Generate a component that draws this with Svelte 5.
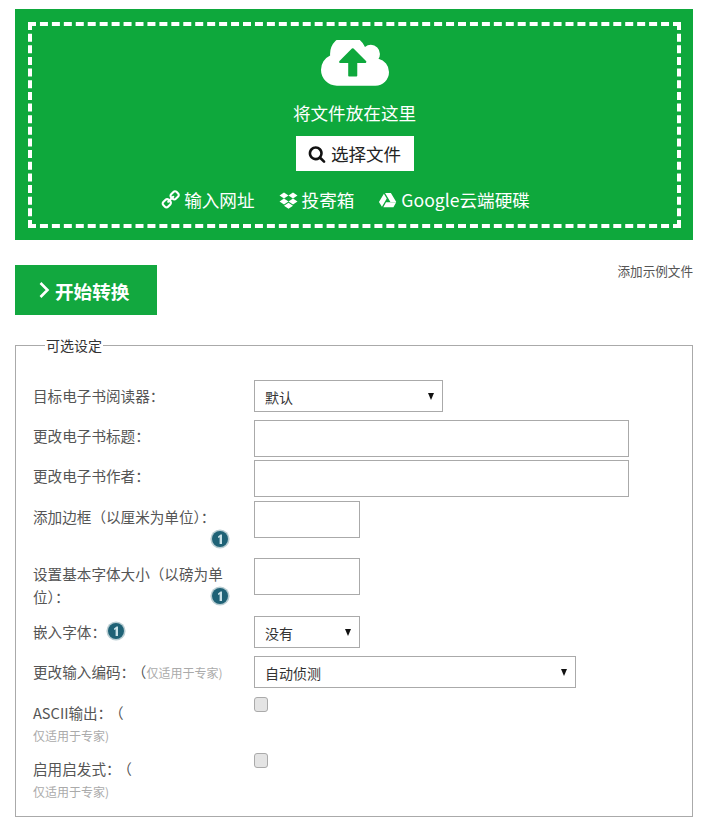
<script lang="ts">
  const hintText = "仅适用于专家)";
</script>

{#snippet info()}
  <svg class="info" width="20" height="20" viewBox="0 0 20 20">
    <circle cx="10" cy="10" r="9.6" fill="#b9cdd2" />
    <circle cx="10" cy="10" r="8" fill="#1f6276" />
    <path d="M8 7.5 10.6 5.6h1.4v9.4H9.6V8.2L8 9z" fill="#c9e2e8" />
  </svg>
{/snippet}

<div class="page">
  <section class="drop">
    <div class="dashed">
      <svg class="cloud" width="68" height="46" viewBox="0 256 1920 1280">
        <path fill="#fff" d="M1280 864q0-14-9-23l-352-352q-9-9-23-9t-23 9l-351 351q-10 12-10 24 0 14 9 23t23 9h224v352q0 13 9.5 22.5t22.5 9.5h192q13 0 22.5-9.5t9.5-22.5v-352h224q13 0 22.5-9.5t9.5-22.5zm640 288q0 159-112.5 271.5t-271.5 112.5h-1088q-185 0-316.5-131.5t-131.5-316.5q0-130 70-240t188-165q-2-30-2-43 0-212 150-362t362-150q156 0 285.5 87t188.5 231q71-62 166-62 106 0 181 75t75 181q0 76-41 138 130 31 213.5 135.5t83.5 238.5z" />
      </svg>
      <p class="drop-text">将文件放在这里</p>
      <button class="pick">
        <svg width="18" height="18" viewBox="0 0 1792 1792">
          <path fill="#111" d="M1216 832q0-185-131.5-316.5t-316.5-131.5-316.5 131.5-131.5 316.5 131.5 316.5 316.5 131.5 316.5-131.5 131.5-316.5zm512 832q0 52-38 90t-90 38q-54 0-90-38l-343-342q-179 124-399 124-143 0-273.5-55.5t-225-150-150-225-55.5-273.5 55.5-273.5 150-225 225-150 273.5-55.5 273.5 55.5 225 150 150 225 55.5 273.5q0 220-124 399l343 343q37 37 37 90z" />
        </svg>
        选择文件
      </button>
      <div class="sources">
        <span class="source">
          <svg class="flip" width="20" height="20" viewBox="0 0 1792 1792">
            <path fill="#fff" d="M1456 1216q0-40-28-68l-208-208q-28-28-68-28-42 0-72 32 3 3 19 18.5t21.5 21.5 15 19 13 25.5 3.5 27.5q0 40-28 68t-68 28q-15 0-27.5-3.5t-25.5-13-19-15-21.5-21.5-18.5-19q-33 31-33 73 0 40 28 68l206 207q27 27 68 27 40 0 68-26l147-146q28-28 28-67zm-703-705q0-40-28-68l-206-207q-28-28-68-28-39 0-68 27l-147 146q-28 28-28 67 0 40 28 68l208 208q27 27 68 27 42 0 72-31-3-3-19-18.5t-21.5-21.5-15-19-13-25.5-3.5-27.5q0-40 28-68t68-28q15 0 27.5 3.5t25.5 13 19 15 21.5 21.5 18.5 19q33-31 33-73zm895 705q0 120-85 203l-147 146q-83 83-203 83-121 0-204-85l-206-207q-83-83-83-203 0-123 88-209l-88-88q-86 88-208 88-120 0-204-84l-208-208q-84-84-84-204t85-203l147-146q83-83 203-83 121 0 204 85l206 207q83 83 83 203 0 123-88 209l88 88q86-88 208-88 120 0 204 84l208 208q84 84 84 204z" />
          </svg>
          输入网址
        </span>
        <span class="source">
          <svg width="19" height="18" viewBox="0 0 24 24">
            <path fill="#fff" d="M6 2 12 6 6 10 0 6ZM18 2 24 6 18 10 12 6ZM0 14 6 10 12 14 6 18ZM24 14 18 10 12 14 18 18ZM6 19.5 12 15.5 18 19.5 12 23.5Z" />
          </svg>
          投寄箱
        </span>
        <span class="source">
          <svg width="19" height="18" viewBox="0 0 24 24">
            <path fill="#fff" d="M7.2 3.5 11 10 4.6 21 .6 14.5ZM8.7 2.5h7.8l7.2 12h-7.8ZM6.4 21.5 10 15h13.6l-3.7 6.5Z" />
          </svg>
          Google云端硬碟
        </span>
      </div>
    </div>
  </section>

  <div class="actions">
    <button class="start">
      <svg width="12" height="18" viewBox="0 0 12 18">
        <polyline points="2.5,2 9.5,9 2.5,16" fill="none" stroke="#fff" stroke-width="2.6" />
      </svg>
      开始转换
    </button>
    <span class="sample">添加示例文件</span>
  </div>

  <fieldset>
    <legend>可选设定</legend>
    <div class="form">
      <span class="label">目标电子书阅读器：</span>
      <div class="select w189"><select><option>默认</option></select></div>

      <span class="label">更改电子书标题：</span>
      <input class="text wide" type="text" />

      <span class="label">更改电子书作者：</span>
      <input class="text wide" type="text" />

      <span class="label">添加边框（以厘米为单位）：{@render info()}</span>
      <input class="text narrow" type="text" />

      <span class="label">设置基本字体大小（以磅为单位）：{@render info()}</span>
      <input class="text narrow" type="text" />

      <span class="label">嵌入字体：{@render info()}</span>
      <div class="select narrow"><select><option>没有</option></select></div>

      <span class="label nowrap">更改输入编码：<span class="paren">（</span><small>{hintText}</small></span>
      <div class="select w322"><select><option>自动侦测</option></select></div>

      <span class="label">ASCII输出：<span class="paren">（</span><small class="block">{hintText}</small></span>
      <input class="check" type="checkbox" />

      <span class="label">启用启发式：<span class="paren">（</span><small class="block">{hintText}</small></span>
      <input class="check" type="checkbox" />
    </div>
  </fieldset>
</div>

<style>
  :global(body) {
    margin: 0;
    background: #fff;
    font-family: "Noto Sans CJK SC", "Noto Sans", sans-serif;
  }

  .page {
    padding: 9px 13px 0 15px;
  }

  .drop {
    background: #0ea83c;
    padding: 13px 12px 12px 13px;
  }

  .dashed {
    box-sizing: border-box;
    height: 206px;
    border: 4px dashed #fff;
    padding-top: 14px;
    display: flex;
    flex-direction: column;
    align-items: center;
    color: #fff;
  }

  .cloud {
    display: block;
    flex-shrink: 0;
  }

  .drop-text {
    margin: 14px 0 0;
    font-size: 17.6px;
    line-height: 26px;
  }

  .pick {
    margin-top: 10px;
    width: 118px;
    height: 35px;
    border: none;
    background: #fff;
    color: #222;
    font: inherit;
    font-size: 17.5px;
    padding: 0;
    display: flex;
    align-items: center;
    justify-content: center;
    gap: 5px;
  }

  .sources {
    margin-top: 16px;
    padding-right: 19px;
    display: flex;
    gap: 24px;
    font-size: 17.6px;
    line-height: 26px;
  }

  .source {
    display: flex;
    align-items: center;
    gap: 4px;
  }

  .flip {
    transform: scaleX(-1);
  }

  .actions {
    margin-top: 25px;
    display: flex;
    justify-content: space-between;
    align-items: flex-start;
  }

  .start {
    width: 142px;
    height: 50px;
    border: none;
    background: #12a83f;
    color: #fff;
    font: inherit;
    font-size: 18.6px;
    font-weight: 700;
    padding: 0 0 0 23px;
    display: flex;
    align-items: center;
    gap: 5px;
  }

  .sample {
    font-size: 12.6px;
    line-height: 14px;
    color: #555;
    margin-top: -1px;
  }

  fieldset {
    box-sizing: border-box;
    margin: 19px 0 0;
    padding: 24px 16px 0 17px;
    border: 1px solid #aaa;
  }

  legend {
    margin-left: 12px;
    padding: 0 1px;
    font-size: 14px;
    line-height: 22px;
    color: #333;
  }

  .form {
    display: grid;
    grid-template-columns: 199px 1fr;
    grid-template-rows: 40px 40px 41px 57px 58px 40px 41px 56px 63px;
    column-gap: 22px;
    align-items: start;
    justify-items: start;
  }

  .label {
    display: block;
    padding-top: 4px;
    font-size: 14.6px;
    line-height: 23px;
    color: #555;
  }

  .nowrap {
    white-space: nowrap;
  }

  .paren {
    margin-left: 4px;
  }

  small {
    font-size: 12px;
    color: #aaa;
  }

  small.block {
    display: block;
  }

  .info {
    float: right;
    margin: 1px 2px 0 0;
  }

  .select {
    position: relative;
    height: 32px;
  }

  .select::after {
    content: "";
    position: absolute;
    top: 13px;
    right: 9px;
    border-left: 3.5px solid transparent;
    border-right: 3.5px solid transparent;
    border-top: 7px solid #111;
    pointer-events: none;
  }

  select {
    appearance: none;
    box-sizing: border-box;
    width: 100%;
    height: 32px;
    margin: 0;
    border: 1px solid #aaa;
    border-radius: 0;
    background: #fff;
    padding: 2px 0 0 10px;
    font: inherit;
    font-size: 14px;
    color: #333;
  }

  .w189 {
    width: 189px;
  }

  .w322 {
    width: 322px;
  }

  .narrow {
    width: 106px;
  }

  .text {
    box-sizing: border-box;
    height: 37px;
    margin: 0;
    border: 1px solid #aaa;
    background: #fff;
  }

  .wide {
    width: 375px;
  }

  .check {
    appearance: none;
    box-sizing: border-box;
    width: 14px;
    height: 15px;
    margin: 0;
    border: 1px solid #aaa;
    border-radius: 3px;
    background: #e4e4e4;
  }
</style>
